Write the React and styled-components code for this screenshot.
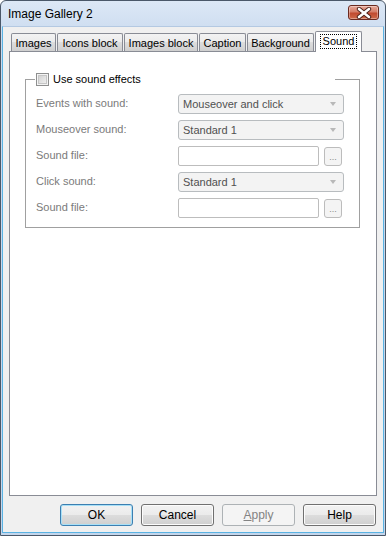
import React from 'react';
import styled, { createGlobalStyle } from 'styled-components';

const GlobalStyle = createGlobalStyle`
  html, body { margin: 0; padding: 0; background: #fff; }
  body { font-family: "Liberation Sans", Arial, sans-serif; font-size: 11px; color: #000; }
  * { box-sizing: border-box; }
`;

const tabs = [
  { label: 'Images', width: 45 },
  { label: 'Icons block', width: 66 },
  { label: 'Images block', width: 74 },
  { label: 'Caption', width: 47 },
  { label: 'Background', width: 67 },
  { label: 'Sound', width: 47, active: true },
];

const rows = [
  { label: 'Events with sound:', kind: 'select', value: 'Mouseover and click' },
  { label: 'Mouseover sound:', kind: 'select', value: 'Standard 1' },
  { label: 'Sound file:', kind: 'file' },
  { label: 'Click sound:', kind: 'select', value: 'Standard 1' },
  { label: 'Sound file:', kind: 'file' },
];

const App = () => {
  return (
    <>
      <GlobalStyle />
      <Window>
        <TitleBar>
          <span>Image Gallery 2</span>
          <CloseButton>
            <svg width="16" height="12" viewBox="0 0 16 12">
              <path d="M3 2 L13 10 M13 2 L3 10" stroke="#4a1f18" strokeWidth="4.4" strokeLinecap="round" />
              <path d="M3 2 L13 10 M13 2 L3 10" stroke="#fff" strokeWidth="2.6" strokeLinecap="round" />
            </svg>
          </CloseButton>
        </TitleBar>
        <Client>
          <TabRow>
            {tabs.map((t) => (
              <Tab key={t.label} $w={t.width} $active={t.active}>
                {t.active ? <Focus>{t.label}</Focus> : t.label}
              </Tab>
            ))}
          </TabRow>
          <Panel>
            <Group>
              <Legend>
                <CheckBox />
                <span>Use sound effects</span>
              </Legend>
              <Grid>
                {rows.map((r, i) => (
                  <React.Fragment key={i}>
                    <Label>{r.label}</Label>
                    {r.kind === 'select' ? (
                      <Select>
                        <span>{r.value}</span>
                        <Arrow />
                      </Select>
                    ) : (
                      <FileRow>
                        <TextBox />
                        <Browse>...</Browse>
                      </FileRow>
                    )}
                  </React.Fragment>
                ))}
              </Grid>
            </Group>
          </Panel>
          <ButtonRow>
            <Button $default>OK</Button>
            <Button>Cancel</Button>
            <Button $disabled><u>A</u>pply</Button>
            <Button>Help</Button>
          </ButtonRow>
        </Client>
      </Window>
    </>
  );
};

const Window = styled.div`
  width: 386px;
  height: 536px;
  display: flex;
  flex-direction: column;
  border: 1px solid #4a5869;
  border-radius: 6px 6px 0 0;
  background: linear-gradient(#dce8f6, #c8d9ee 40px, #c4d6ec);
  padding: 0 1px 2px 1px;
`;

const TitleBar = styled.div`
  height: 25px;
  display: flex;
  align-items: center;
  justify-content: space-between;
  padding: 0 5px 0 6px;
  font-size: 12px;
  color: #000;
`;

const CloseButton = styled.div`
  width: 31px;
  height: 15px;
  margin-top: -2px;
  display: flex;
  align-items: center;
  justify-content: center;
  border: 1px solid #6b2a20;
  border-radius: 3px;
  background: linear-gradient(#e8a99b, #d47d68 45%, #c04a30 55%, #cf6a4a);
  box-shadow: inset 0 0 0 1px rgba(255, 255, 255, 0.35);
`;

const Client = styled.div`
  flex: 1;
  display: flex;
  flex-direction: column;
  background: #f0f0f0;
  border: 1px solid #5ab3e3;
  border-top-color: #b4c9e2;
  padding: 4px 6px 6px 6px;
`;

const TabRow = styled.div`
  height: 20px;
  display: flex;
  align-items: flex-end;
  gap: 1px;
  margin-left: 2px;
  position: relative;
  z-index: 1;
`;

const Tab = styled.div`
  width: ${(p) => p.$w}px;
  height: ${(p) => (p.$active ? 21 : 18)}px;
  margin-bottom: ${(p) => (p.$active ? -1 : 0)}px;
  display: flex;
  align-items: center;
  justify-content: center;
  padding-top: ${(p) => (p.$active ? 0 : 1)}px;
  border: 1px solid #898c95;
  border-bottom: none;
  border-radius: 2px 2px 0 0;
  background: ${(p) => (p.$active ? '#fff' : 'linear-gradient(#f3f3f3, #ebebeb 50%, #dddddd 50%, #cfcfcf)')};
  white-space: nowrap;
`;

const Focus = styled.span`
  border: 1px dotted #000;
  padding: 0 2px 1px 2px;
  margin-top: -1px;
`;

const Panel = styled.div`
  height: 445px;
  background: #fff;
  border: 1px solid #898c95;
  padding: 20px 15px 0 15px;
`;

const Group = styled.fieldset`
  width: 335px;
  margin: 0;
  border: 1px solid #a0a0a0;
  padding: 8px 15px 9px 10px;
`;

const Legend = styled.legend`
  width: 300px;
  height: 14px;
  padding: 0 0 0 1px;
  margin-left: -1px;
  display: flex;
  align-items: center;
  gap: 4px;
  font-size: 11px;
  color: #000;
`;

const CheckBox = styled.span`
  width: 13px;
  height: 13px;
  border: 1px solid #8e8f8f;
  background: #f4f4f4;
  box-shadow: inset 0 0 0 1px #f4f4f4, inset 0 0 0 2px #c6c6c6;
  background-image: linear-gradient(135deg, #cbcbcb, #f6f6f6);
`;

const Grid = styled.div`
  display: grid;
  grid-template-columns: 142px 166px;
  row-gap: 6px;
  align-items: center;
`;

const Label = styled.span`
  color: #7a7a7a;
  font-size: 11px;
  margin-top: -2px;
`;

const Select = styled.div`
  height: 20px;
  display: flex;
  align-items: center;
  justify-content: space-between;
  padding: 0 7px 0 4px;
  border: 1px solid #b8bcbf;
  border-radius: 3px;
  background: #f3f3f3;
  color: #505050;
`;

const Arrow = styled.span`
  width: 0;
  height: 0;
  border-left: 3.5px solid transparent;
  border-right: 3.5px solid transparent;
  border-top: 4px solid #b8b8b8;
`;

const FileRow = styled.div`
  display: flex;
  align-items: center;
  gap: 5px;
`;

const TextBox = styled.div`
  width: 141px;
  height: 20px;
  border: 1px solid #bdbdbd;
  border-radius: 2px;
  background: #fff;
`;

const Browse = styled.div`
  width: 18px;
  height: 19px;
  display: flex;
  align-items: flex-end;
  justify-content: center;
  padding-bottom: 3px;
  border: 1px solid #bcbcbc;
  border-radius: 3px;
  background: #f4f4f4;
  color: #8a8a8a;
  font-size: 9px;
  line-height: 1;
`;

const ButtonRow = styled.div`
  margin-top: 8px;
  display: flex;
  justify-content: flex-end;
  gap: 8px;
  padding-right: 1px;
`;

const Button = styled.div`
  width: 73px;
  height: 22px;
  display: flex;
  align-items: center;
  justify-content: center;
  border: 1px solid ${(p) => (p.$default ? '#3c7fb1' : p.$disabled ? '#adb2b5' : '#707070')};
  border-radius: 3px;
  background: ${(p) => (p.$disabled ? '#f4f4f4' : 'linear-gradient(#f2f2f2, #ebebeb 50%, #dddddd 50%, #cfcfcf)')};
  box-shadow: ${(p) => (p.$default ? 'inset 0 0 0 1px #a8e0f7' : p.$disabled ? 'none' : 'inset 0 0 0 1px #fcfcfc')};
  color: ${(p) => (p.$disabled ? '#838383' : '#000')};
  font-size: 12px;
  u { text-decoration: underline; }
`;

export default App;
